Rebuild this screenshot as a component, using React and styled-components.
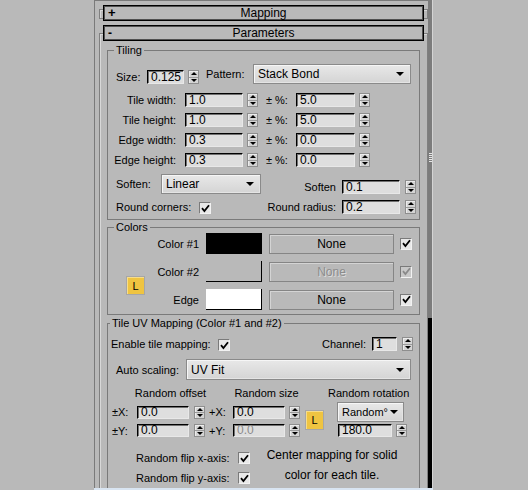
import React from "react";
import styled, { createGlobalStyle } from "styled-components";

const BG = "#b9b9b9";

const GlobalStyle = createGlobalStyle`
  html, body { margin: 0; padding: 0; background: ${BG}; }
  body {
    font-family: "Liberation Sans", Arial, sans-serif;
    font-size: 11px;
    color: #000;
  }
`;

const Screen = styled.div`
  display: flex;
  width: 528px;
  height: 490px;
  overflow: hidden;
  background: ${BG};
`;

const Gutter = styled.div`
  flex: none;
  width: 94px;
`;

const Panel = styled.div`
  flex: none;
  display: flex;
  flex-direction: column;
  width: 339px;
  height: 490px;
`;

const PanelMain = styled.div`
  flex: 1;
  display: flex;
  min-height: 0;
`;

const Content = styled.div`
  flex: none;
  width: 334px;
  box-sizing: border-box;
  border-left: 1px solid #7a7a7a;
  border-top: 1px solid #7a7a7a;
  padding: 4px 0 0 4px;
  overflow: hidden;
`;

const Scrollbar = styled.div`
  flex: none;
  width: 4px;
  display: flex;
  flex-direction: column;
  border-right: 1px solid #d4d4d4;
`;

const Track = styled.div`
  height: 318px;
  background: #7c7c7c;
  display: flex;
  justify-content: center;
`;

const Grip = styled.div`
  margin-top: 153px;
  width: 3px;
  height: 9px;
  background: repeating-linear-gradient(#e6e6e6 0 1px, transparent 1px 2px);
`;

const Thumb = styled.div`
  flex: 1;
  background: #000;
`;

const BottomEdge = styled.div`
  flex: none;
  height: 2px;
  background: #d9e5f2;
`;

/* rollouts */
const Rollout = styled.div`
  position: relative;
  margin-bottom: 4px;
  &::before {
    content: "";
    position: absolute;
    left: 0;
    right: 0;
    top: ${(p) => (p.$open ? 8 : 4)}px;
    bottom: ${(p) => (p.$open ? -20 : 2)}px;
    border: 1px solid #808080;
    box-shadow: inset 1px 1px 0 #d8d8d8;
  }
`;

const RolloutHeader = styled.div`
  position: relative;
  margin: 0 4px;
  height: 16px;
  box-sizing: border-box;
  border: 1px solid #000;
  box-shadow: inset 0 0 0 1px #505050;
  background: ${BG};
  display: grid;
  grid-template-columns: 20px 1fr 20px;
  align-items: center;
  line-height: 14px;
  font-size: 12px;
`;

const Toggle = styled.span`
  padding-left: 4px;
  font-weight: bold;
  font-size: ${(p) => (p.$plus ? 13 : 12)}px;
`;

const HeaderTitle = styled.span`
  text-align: center;
`;

const RolloutBody = styled.div`
  position: relative;
  padding: 9px 8px 0 8px;
`;

/* group boxes */
const Group = styled.div`
  border: 1px solid #7a7a7a;
  padding-bottom: ${(p) => p.$pb || 0}px;
  margin-bottom: ${(p) => p.$mb || 0}px;
`;

const Caption = styled.div`
  margin: -7px 0 0 ${(p) => p.$x}px;
  padding: 0 2px;
  width: fit-content;
  height: 13px;
  line-height: 13px;
  background: ${BG};
`;

const Row = styled.div`
  display: flex;
  align-items: ${(p) => p.$align || "center"};
  height: ${(p) => p.$h}px;
  margin-top: ${(p) => p.$mt || 0}px;
  padding-left: ${(p) => p.$pl || 0}px;
`;

const Label = styled.span`
  flex: none;
  box-sizing: border-box;
  width: ${(p) => (p.$w ? `${p.$w}px` : "auto")};
  margin-left: ${(p) => p.$ml || 0}px;
  padding-right: ${(p) => p.$pr || 0}px;
  padding-left: ${(p) => p.$pl || 0}px;
  text-align: ${(p) => (p.$right ? "right" : "left")};
  align-self: ${(p) => p.$self || "auto"};
  line-height: 14px;
  white-space: nowrap;
`;

const Field = styled.div`
  flex: none;
  box-sizing: border-box;
  width: ${(p) => p.$w}px;
  height: ${(p) => p.$h || 14}px;
  margin-left: ${(p) => p.$ml || 0}px;
  background: #dedede;
  border-top: 1px solid #000;
  border-left: 1px solid #000;
  border-right: 1px solid #e8e8e8;
  border-bottom: 1px solid #e8e8e8;
  box-shadow: inset 1px 1px 0 #707070;
  padding-left: 3px;
  line-height: ${(p) => (p.$h || 14) - 2}px;
  font-size: 12px;
  color: ${(p) => (p.$disabled ? "#8a8a8a" : "#000")};
  white-space: nowrap;
  overflow: hidden;
`;

const Spinner = styled.div`
  flex: none;
  box-sizing: border-box;
  width: 11px;
  height: ${(p) => p.$h || 14}px;
  margin-left: ${(p) => p.$ml || 4}px;
  display: flex;
  flex-direction: column;
  border: 1px solid #8e8e8e;
  box-shadow: inset 1px 1px 0 #ececec;
  background: #d4d4d4;
`;

const SpinHalf = styled.div`
  flex: 1;
  display: flex;
  align-items: center;
  justify-content: center;
  & + & {
    border-top: 1px solid #9a9a9a;
  }
  &::after {
    content: "";
    border-left: 3px solid transparent;
    border-right: 3px solid transparent;
    ${(p) => (p.$down ? "border-top" : "border-bottom")}: 3px solid #000;
  }
`;

const Spin = ({ ml, h }) => (
  <Spinner $ml={ml} $h={h}>
    <SpinHalf />
    <SpinHalf $down />
  </Spinner>
);

const Dropdown = styled.div`
  flex: none;
  box-sizing: border-box;
  width: ${(p) => p.$w}px;
  height: ${(p) => p.$h || 20}px;
  margin-left: ${(p) => p.$ml || 0}px;
  border: 1px solid #8a8a8a;
  box-shadow: inset 1px 1px 0 #f6f6f6, inset -1px -1px 0 #e4e4e4;
  background: linear-gradient(#e8e8e8, #d4d4d4);
  display: flex;
  align-items: center;
  justify-content: space-between;
  padding: 0 ${(p) => p.$pr || 6}px 0 4px;
  font-size: ${(p) => p.$fs || 12}px;
  white-space: nowrap;
  &::after {
    content: "";
    border-left: 4px solid transparent;
    border-right: 4px solid transparent;
    border-top: 4px solid #000;
  }
`;

const CheckBox = styled.div`
  flex: none;
  box-sizing: border-box;
  width: 12px;
  height: 12px;
  margin-left: ${(p) => p.$ml || 0}px;
  border-top: 1px solid #7a7a7a;
  border-left: 1px solid #7a7a7a;
  border-right: 1px solid #f2f2f2;
  border-bottom: 1px solid #f2f2f2;
  background: ${(p) => (p.$disabled ? "#c8c8c8" : "#e8e8e8")};
  display: flex;
  align-items: center;
  justify-content: center;
`;

const Check = ({ disabled, ml }) => (
  <CheckBox $disabled={disabled} $ml={ml}>
    <svg width="9" height="9" viewBox="0 0 9 9">
      <path
        d="M1 4.2 L3.4 7 L8 1.2"
        fill="none"
        stroke={disabled ? "#8a8a8a" : "#000"}
        strokeWidth="1.8"
      />
    </svg>
  </CheckBox>
);

const LockButton = styled.div`
  flex: none;
  box-sizing: border-box;
  width: 19px;
  height: ${(p) => p.$h || 19}px;
  margin-left: ${(p) => p.$ml || 0}px;
  margin-top: ${(p) => p.$mt || 0}px;
  background: #efc441;
  border: 1px solid #a6a6a6;
  box-shadow: inset 1px 1px 0 #f7dd8a;
  display: flex;
  align-items: center;
  justify-content: center;
  font-size: 11px;
`;

/* colors */
const ColorsBody = styled.div`
  display: flex;
  margin-top: -1px;
`;

const LockCol = styled.div`
  flex: none;
  width: 42px;
  padding-left: 18px;
  box-sizing: border-box;
`;

const ColorRows = styled.div`
  display: flex;
  flex-direction: column;
  gap: 7px;
`;

const ColorRow = styled.div`
  display: flex;
  align-items: center;
  height: 21px;
`;

const Swatch = styled.div`
  flex: none;
  box-sizing: border-box;
  width: 56px;
  height: 21px;
  background: ${(p) => p.$color};
  border-right: 1px solid #000;
  border-bottom: 1px solid #000;
`;

const MapButton = styled.div`
  flex: none;
  box-sizing: border-box;
  width: 125px;
  height: 20px;
  margin-left: 7px;
  border: 1px solid #858585;
  box-shadow: inset 1px 1px 0 #d4d4d4;
  display: flex;
  align-items: center;
  justify-content: center;
  font-size: 12px;
  color: ${(p) => (p.$disabled ? "#8c8c8c" : "#000")};
  text-shadow: ${(p) => (p.$disabled ? "1px 1px 0 #dcdcdc" : "none")};
`;

/* random grid */
const RandomGrid = styled.div`
  display: grid;
  grid-template-columns: 25px 67px 29px 67px 37px 70px;
  grid-template-rows: 13px 20px 13px;
  row-gap: 2px;
  margin-top: 7px;
  padding-left: 4px;
  align-items: center;
`;

const Heading = styled.div`
  grid-column: ${(p) => p.$col};
  grid-row: 1;
  justify-self: ${(p) => (p.$shift ? "start" : "center")};
  margin-left: ${(p) => p.$shift || 0}px;
  white-space: nowrap;
  line-height: 13px;
`;

const Cell = styled.div`
  grid-column: ${(p) => p.$col};
  grid-row: ${(p) => p.$row};
  display: flex;
  align-items: center;
  padding-left: ${(p) => p.$pl || 0}px;
  white-space: nowrap;
`;

/* flips */
const FlipArea = styled.div`
  display: flex;
  margin-top: 11px;
`;

const FlipCol = styled.div`
  flex: none;
  padding-left: 28px;
`;

const FlipRow = styled.div`
  display: flex;
  align-items: center;
  height: 20px;
`;

const Note = styled.div`
  flex: none;
  width: 140px;
  margin-left: 12px;
  margin-top: -3px;
  text-align: center;
  line-height: 20px;
  font-size: 12px;
`;

export default function App() {
  return (
    <>
      <GlobalStyle />
      <Screen>
        <Gutter />
        <Panel>
          <PanelMain>
            <Content>
              <Rollout>
                <RolloutHeader>
                  <Toggle $plus>+</Toggle>
                  <HeaderTitle>Mapping</HeaderTitle>
                </RolloutHeader>
              </Rollout>

              <Rollout $open>
                <RolloutHeader>
                  <Toggle>-</Toggle>
                  <HeaderTitle>Parameters</HeaderTitle>
                </RolloutHeader>

                <RolloutBody>
                  <Group $pb={5} $mb={7}>
                    <Caption $x={6}>Tiling</Caption>
                    <Row $h={20} $mt={7} $pl={8} $align="flex-end">
                      <Label $w={31}>Size:</Label>
                      <Field $w={37}>0.125</Field>
                      <Spin ml={4} />
                      <Label $w={47} $ml={7} $self="center">Pattern:</Label>
                      <Dropdown $w={158}>Stack Bond</Dropdown>
                    </Row>

                    {[
                      ["Tile width:", "1.0", "5.0", 9],
                      ["Tile height:", "1.0", "5.0", 6],
                      ["Edge width:", "0.3", "0.0", 6],
                      ["Edge height:", "0.3", "0.0", 6],
                    ].map(([label, v1, v2, mt]) => (
                      <Row key={label} $h={14} $mt={mt}>
                        <Label $w={77} $right $pr={9}>{label}</Label>
                        <Field $w={58}>{v1}</Field>
                        <Spin ml={4} />
                        <Label $w={38} $pl={8}>± %:</Label>
                        <Field $w={59}>{v2}</Field>
                        <Spin ml={4} />
                      </Row>
                    ))}

                    <Row $h={20} $mt={7} $pl={8} $align="flex-end">
                      <Label $w={45} $self="center">Soften:</Label>
                      <Dropdown $w={100}>Linear</Dropdown>
                      <Label $w={81} $right $pr={6}>Soften</Label>
                      <Field $w={58}>0.1</Field>
                      <Spin ml={5} />
                    </Row>

                    <Row $h={14} $mt={6} $pl={8} $align="flex-end">
                      <Label $w={83}>Round corners:</Label>
                      <Check />
                      <Label $w={131} $right $pr={6}>Round radius:</Label>
                      <Field $w={58}>0.2</Field>
                      <Spin ml={5} />
                    </Row>
                  </Group>

                  <Group $pb={4} $mb={8}>
                    <Caption $x={6}>Colors</Caption>
                    <ColorsBody>
                      <LockCol>
                        <LockButton $mt={43}>L</LockButton>
                      </LockCol>
                      <ColorRows>
                        <ColorRow>
                          <Label $w={56} $right $pr={7}>Color #1</Label>
                          <Swatch $color="#000" />
                          <MapButton>None</MapButton>
                          <Check ml={6} />
                        </ColorRow>
                        <ColorRow>
                          <Label $w={56} $right $pr={7}>Color #2</Label>
                          <Swatch $color={BG} />
                          <MapButton $disabled>None</MapButton>
                          <Check ml={6} disabled />
                        </ColorRow>
                        <ColorRow>
                          <Label $w={56} $right $pr={7}>Edge</Label>
                          <Swatch $color="#fff" />
                          <MapButton>None</MapButton>
                          <Check ml={6} />
                        </ColorRow>
                      </ColorRows>
                    </ColorsBody>
                  </Group>

                  <Group>
                    <Caption $x={2}>Tile UV Mapping (Color #1 and #2)</Caption>
                    <Row $h={14} $mt={7} $pl={3} $align="flex-end">
                      <Label $w={107}>Enable tile mapping:</Label>
                      <Check />
                      <Label $w={142} $right $pr={6}>Channel:</Label>
                      <Field $w={25}>1</Field>
                      <Spin ml={5} />
                    </Row>

                    <Row $h={21} $mt={8} $pl={8}>
                      <Label $w={70}>Auto scaling:</Label>
                      <Dropdown $w={225} $h={21}>UV Fit</Dropdown>
                    </Row>

                    <RandomGrid>
                      <Heading $col={2}>Random offset</Heading>
                      <Heading $col={4}>Random size</Heading>
                      <Heading $col="5 / 7" $shift={28}>Random rotation</Heading>

                      <Cell $col={1} $row={2}>±X:</Cell>
                      <Cell $col={2} $row={2}>
                        <Field $w={52} $h={13}>0.0</Field>
                        <Spin ml={5} h={13} />
                      </Cell>
                      <Cell $col={3} $row={2} $pl={5}>+X:</Cell>
                      <Cell $col={4} $row={2}>
                        <Field $w={52} $h={13}>0.0</Field>
                        <Spin ml={4} h={13} />
                      </Cell>
                      <Cell $col={5} $row="2 / 4">
                        <LockButton $ml={5} $h={20}>L</LockButton>
                      </Cell>
                      <Cell $col={6} $row={2}>
                        <Dropdown $w={67} $fs={11} $pr={5}>Random°</Dropdown>
                      </Cell>

                      <Cell $col={1} $row={3}>±Y:</Cell>
                      <Cell $col={2} $row={3}>
                        <Field $w={52} $h={13}>0.0</Field>
                        <Spin ml={5} h={13} />
                      </Cell>
                      <Cell $col={3} $row={3} $pl={5}>+Y:</Cell>
                      <Cell $col={4} $row={3}>
                        <Field $w={52} $h={13} $disabled>0.0</Field>
                        <Spin ml={4} h={13} />
                      </Cell>
                      <Cell $col={6} $row={3}>
                        <Field $w={54} $h={13} $ml={1}>180.0</Field>
                        <Spin ml={4} h={13} />
                      </Cell>
                    </RandomGrid>

                    <FlipArea>
                      <FlipCol>
                        <FlipRow>
                          <Label $w={102}>Random flip x-axis:</Label>
                          <Check />
                        </FlipRow>
                        <FlipRow>
                          <Label $w={102}>Random flip y-axis:</Label>
                          <Check />
                        </FlipRow>
                      </FlipCol>
                      <Note>
                        Center mapping for solid
                        <br />
                        color for each tile.
                      </Note>
                    </FlipArea>
                  </Group>
                </RolloutBody>
              </Rollout>
            </Content>
            <Scrollbar>
              <Track>
                <Grip />
              </Track>
              <Thumb />
            </Scrollbar>
          </PanelMain>
          <BottomEdge />
        </Panel>
      </Screen>
    </>
  );
}
